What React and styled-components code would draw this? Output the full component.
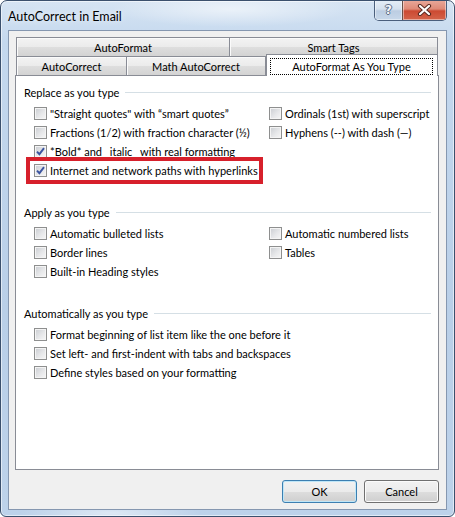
import React from 'react';
import styled, { createGlobalStyle } from 'styled-components';

const GlobalStyle = createGlobalStyle`
  html, body {
    margin: 0;
    padding: 0;
    background: #ffffff;
  }
  body {
    font-family: Lato, "Open Sans", sans-serif;
    font-size: 11px;
    color: #000;
  }
  * {
    box-sizing: border-box;
  }
`;

const Window = styled.div`
  width: 455px;
  height: 517px;
  display: flex;
  flex-direction: column;
  padding: 0 7px 6px;
  border: 1px solid #3b506d;
  border-radius: 7px 7px 6px 6px;
  overflow: hidden;
  background:
    radial-gradient(ellipse 120px 18px at 230px 8px, rgba(255, 255, 255, 0.55), transparent),
    radial-gradient(ellipse 90px 10px at 110px 512px, rgba(255, 255, 255, 0.5), transparent),
    linear-gradient(180deg, #d6e4f3 0%, #c4d8ee 8%, #b9cfe8 60%, #bdd2ea 100%);
  box-shadow: inset 0 0 0 1px rgba(255, 255, 255, 0.55);
`;

const TitleBar = styled.div`
  height: 29px;
  flex: none;
  display: flex;
  align-items: flex-start;
`;

const Title = styled.div`
  flex: 1;
  align-self: center;
  margin-top: 1px;
  font-size: 12.5px;
  color: #000;
  text-shadow: 0 0 6px rgba(255, 255, 255, 0.9);
`;

const CaptionButtons = styled.div`
  display: flex;
  margin-top: -1px;
  border: 1px solid #4b5f7c;
  border-top: none;
  border-radius: 0 0 5px 5px;
  overflow: hidden;
`;

const CaptionButton = styled.div`
  width: ${(p) => p.$w}px;
  height: 20px;
  display: flex;
  align-items: center;
  justify-content: center;
  border-left: ${(p) => (p.$first ? 'none' : '1px solid #6a5048')};
  box-shadow: inset 0 0 0 1px rgba(255, 255, 255, 0.45);
  background: ${(p) =>
    p.$close
      ? 'linear-gradient(180deg, #e9a99b 0%, #df8a77 45%, #cc4a32 55%, #d4644a 100%)'
      : 'linear-gradient(180deg, #e6eef7 0%, #d5e1ee 45%, #bccde2 55%, #c8d8ea 100%)'};
`;

const HelpGlyph = styled.span`
  font-family: "DejaVu Sans", sans-serif;
  font-weight: bold;
  font-size: 12px;
  line-height: 1;
  color: #f4f6f9;
  text-shadow:
    1px 0 0 #5d6f88,
    -1px 0 0 #5d6f88,
    0 1px 0 #5d6f88,
    0 -1px 0 #5d6f88;
`;

const Client = styled.div`
  flex: 1;
  display: flex;
  flex-direction: column;
  background: #f0f0f0;
  border: 1px solid #8597b0;
  padding: 6px 7px 6px 6px;
`;

const TabRow = styled.div`
  height: 19px;
  display: flex;
  align-items: flex-start;
  padding-left: 2px;
`;

const Tab = styled.div`
  width: ${(p) => p.$w}px;
  height: 19px;
  margin-left: -1px;
  display: flex;
  align-items: center;
  justify-content: center;
  border: 1px solid #898c95;
  border-bottom: none;
  background: linear-gradient(180deg, #f3f3f3 0%, #ebebeb 50%, #dedede 51%, #d3d3d3 100%);
  box-shadow: inset 1px 1px 0 #fbfbfb;
  white-space: nowrap;
`;

const ActiveTab = styled.div`
  position: relative;
  z-index: 2;
  width: ${(p) => p.$w}px;
  height: 22px;
  margin-top: -2px;
  display: flex;
  padding: 3px 4px 1px 3px;
  border: 1px solid #898c95;
  border-bottom: none;
  background: #ffffff;
`;

const FocusRing = styled.div`
  flex: 1;
  display: flex;
  align-items: center;
  justify-content: center;
  border: 1px dotted #000;
  white-space: nowrap;
`;

const Panel = styled.div`
  height: 395px;
  flex: none;
  background: #ffffff;
  border: 1px solid #898c95;
  padding-top: 7px;
`;

const Group = styled.div`
  padding: 0 7px 0 8px;
  margin-bottom: 23px;
`;

const Legend = styled.div`
  height: 19px;
  display: flex;
  align-items: center;
  white-space: nowrap;
`;

const LegendLine = styled.div`
  flex: 1;
  height: 1px;
  margin-left: 6px;
  background: #d5dfe5;
`;

const Options = styled.div`
  display: flex;
  margin: 2px 0 0 10px;
`;

const Column = styled.div`
  width: ${(p) => (p.$w ? `${p.$w}px` : 'auto')};
  display: flex;
  flex-direction: column;
`;

const Row = styled.div`
  height: 19px;
  display: flex;
  align-items: center;
  white-space: nowrap;
`;

const Highlight = styled.div`
  width: 237px;
  margin: -4px 0 -4px -8px;
  padding-left: 4px;
  border: 4px solid #d7202b;
`;

const Box = styled.span`
  width: 13px;
  height: 13px;
  flex: none;
  margin-right: 3px;
  display: flex;
  align-items: center;
  justify-content: center;
  border: 1px solid #8e8f8f;
  background: linear-gradient(135deg, #c9ccd1 0%, #e6e7e9 55%, #f7f7f7 100%);
  box-shadow: inset 0 0 0 1px #f4f4f4;
`;

const ButtonRow = styled.div`
  display: flex;
  justify-content: flex-end;
  gap: 7px;
  margin-top: 10px;
`;

const Button = styled.div`
  width: 75px;
  height: 23px;
  display: flex;
  align-items: center;
  justify-content: center;
  border: 1px solid ${(p) => (p.$default ? '#3c7fb1' : '#707070')};
  border-radius: 3px;
  background: linear-gradient(180deg, #f2f2f2 0%, #ebebeb 50%, #dddddd 51%, #cfcfcf 100%);
  box-shadow: inset 0 0 0 1px ${(p) => (p.$default ? '#bfe6f7' : '#fbfbfb')};
`;

function Checkbox({ checked }) {
  return (
    <Box>
      {checked && (
        <svg width="9" height="9" viewBox="0 0 9 9">
          <path d="M1 4.6 L3.4 7.2 L8 1.2" fill="none" stroke="#3c55a0" strokeWidth="1.9" />
        </svg>
      )}
    </Box>
  );
}

function Option({ label, checked }) {
  return (
    <Row>
      <Checkbox checked={checked} />
      <span>{label}</span>
    </Row>
  );
}

function CloseGlyph() {
  return (
    <svg width="15" height="12" viewBox="0 0 15 12">
      <path d="M3 2 L12 10 M12 2 L3 10" stroke="#5a2a22" strokeWidth="4.2" strokeLinecap="round" />
      <path d="M3 2 L12 10 M12 2 L3 10" stroke="#ffffff" strokeWidth="2.2" strokeLinecap="round" />
    </svg>
  );
}

const replaceLeft = [
  { label: '"Straight quotes" with \u201csmart quotes\u201d' },
  { label: 'Fractions (1/2) with fraction character (\u00bd)' },
  { label: '*Bold* and _italic_ with real formatting', checked: true },
];

const replaceRight = [
  { label: 'Ordinals (1st) with superscript' },
  { label: 'Hyphens (--) with dash (\u2014)' },
];

const applyLeft = [
  { label: 'Automatic bulleted lists' },
  { label: 'Border lines' },
  { label: 'Built-in Heading styles' },
];

const applyRight = [{ label: 'Automatic numbered lists' }, { label: 'Tables' }];

const autoItems = [
  { label: 'Format beginning of list item like the one before it' },
  { label: 'Set left- and first-indent with tabs and backspaces' },
  { label: 'Define styles based on your formatting' },
];

export default function App() {
  return (
    <>
      <GlobalStyle />
      <Window>
        <TitleBar>
          <Title>AutoCorrect in Email</Title>
          <CaptionButtons>
            <CaptionButton $w={27} $first>
              <HelpGlyph>?</HelpGlyph>
            </CaptionButton>
            <CaptionButton $w={44} $close>
              <CloseGlyph />
            </CaptionButton>
          </CaptionButtons>
        </TitleBar>

        <Client>
          <TabRow>
            <Tab $w={214}>AutoFormat</Tab>
            <Tab $w={209}>Smart Tags</Tab>
          </TabRow>
          <TabRow>
            <Tab $w={111}>AutoCorrect</Tab>
            <Tab $w={140}>Math AutoCorrect</Tab>
            <ActiveTab $w={172}>
              <FocusRing>AutoFormat As You Type</FocusRing>
            </ActiveTab>
          </TabRow>

          <Panel>
            <Group>
              <Legend>
                Replace as you type
                <LegendLine />
              </Legend>
              <Options>
                <Column $w={235}>
                  {replaceLeft.map((o) => (
                    <Option key={o.label} {...o} />
                  ))}
                  <Highlight>
                    <Option label="Internet and network paths with hyperlinks" checked />
                  </Highlight>
                </Column>
                <Column>
                  {replaceRight.map((o) => (
                    <Option key={o.label} {...o} />
                  ))}
                </Column>
              </Options>
            </Group>

            <Group>
              <Legend>
                Apply as you type
                <LegendLine />
              </Legend>
              <Options>
                <Column $w={235}>
                  {applyLeft.map((o) => (
                    <Option key={o.label} {...o} />
                  ))}
                </Column>
                <Column>
                  {applyRight.map((o) => (
                    <Option key={o.label} {...o} />
                  ))}
                </Column>
              </Options>
            </Group>

            <Group>
              <Legend>
                Automatically as you type
                <LegendLine />
              </Legend>
              <Options>
                <Column>
                  {autoItems.map((o) => (
                    <Option key={o.label} {...o} />
                  ))}
                </Column>
              </Options>
            </Group>
          </Panel>

          <ButtonRow>
            <Button $default>OK</Button>
            <Button>Cancel</Button>
          </ButtonRow>
        </Client>
      </Window>
    </>
  );
}
